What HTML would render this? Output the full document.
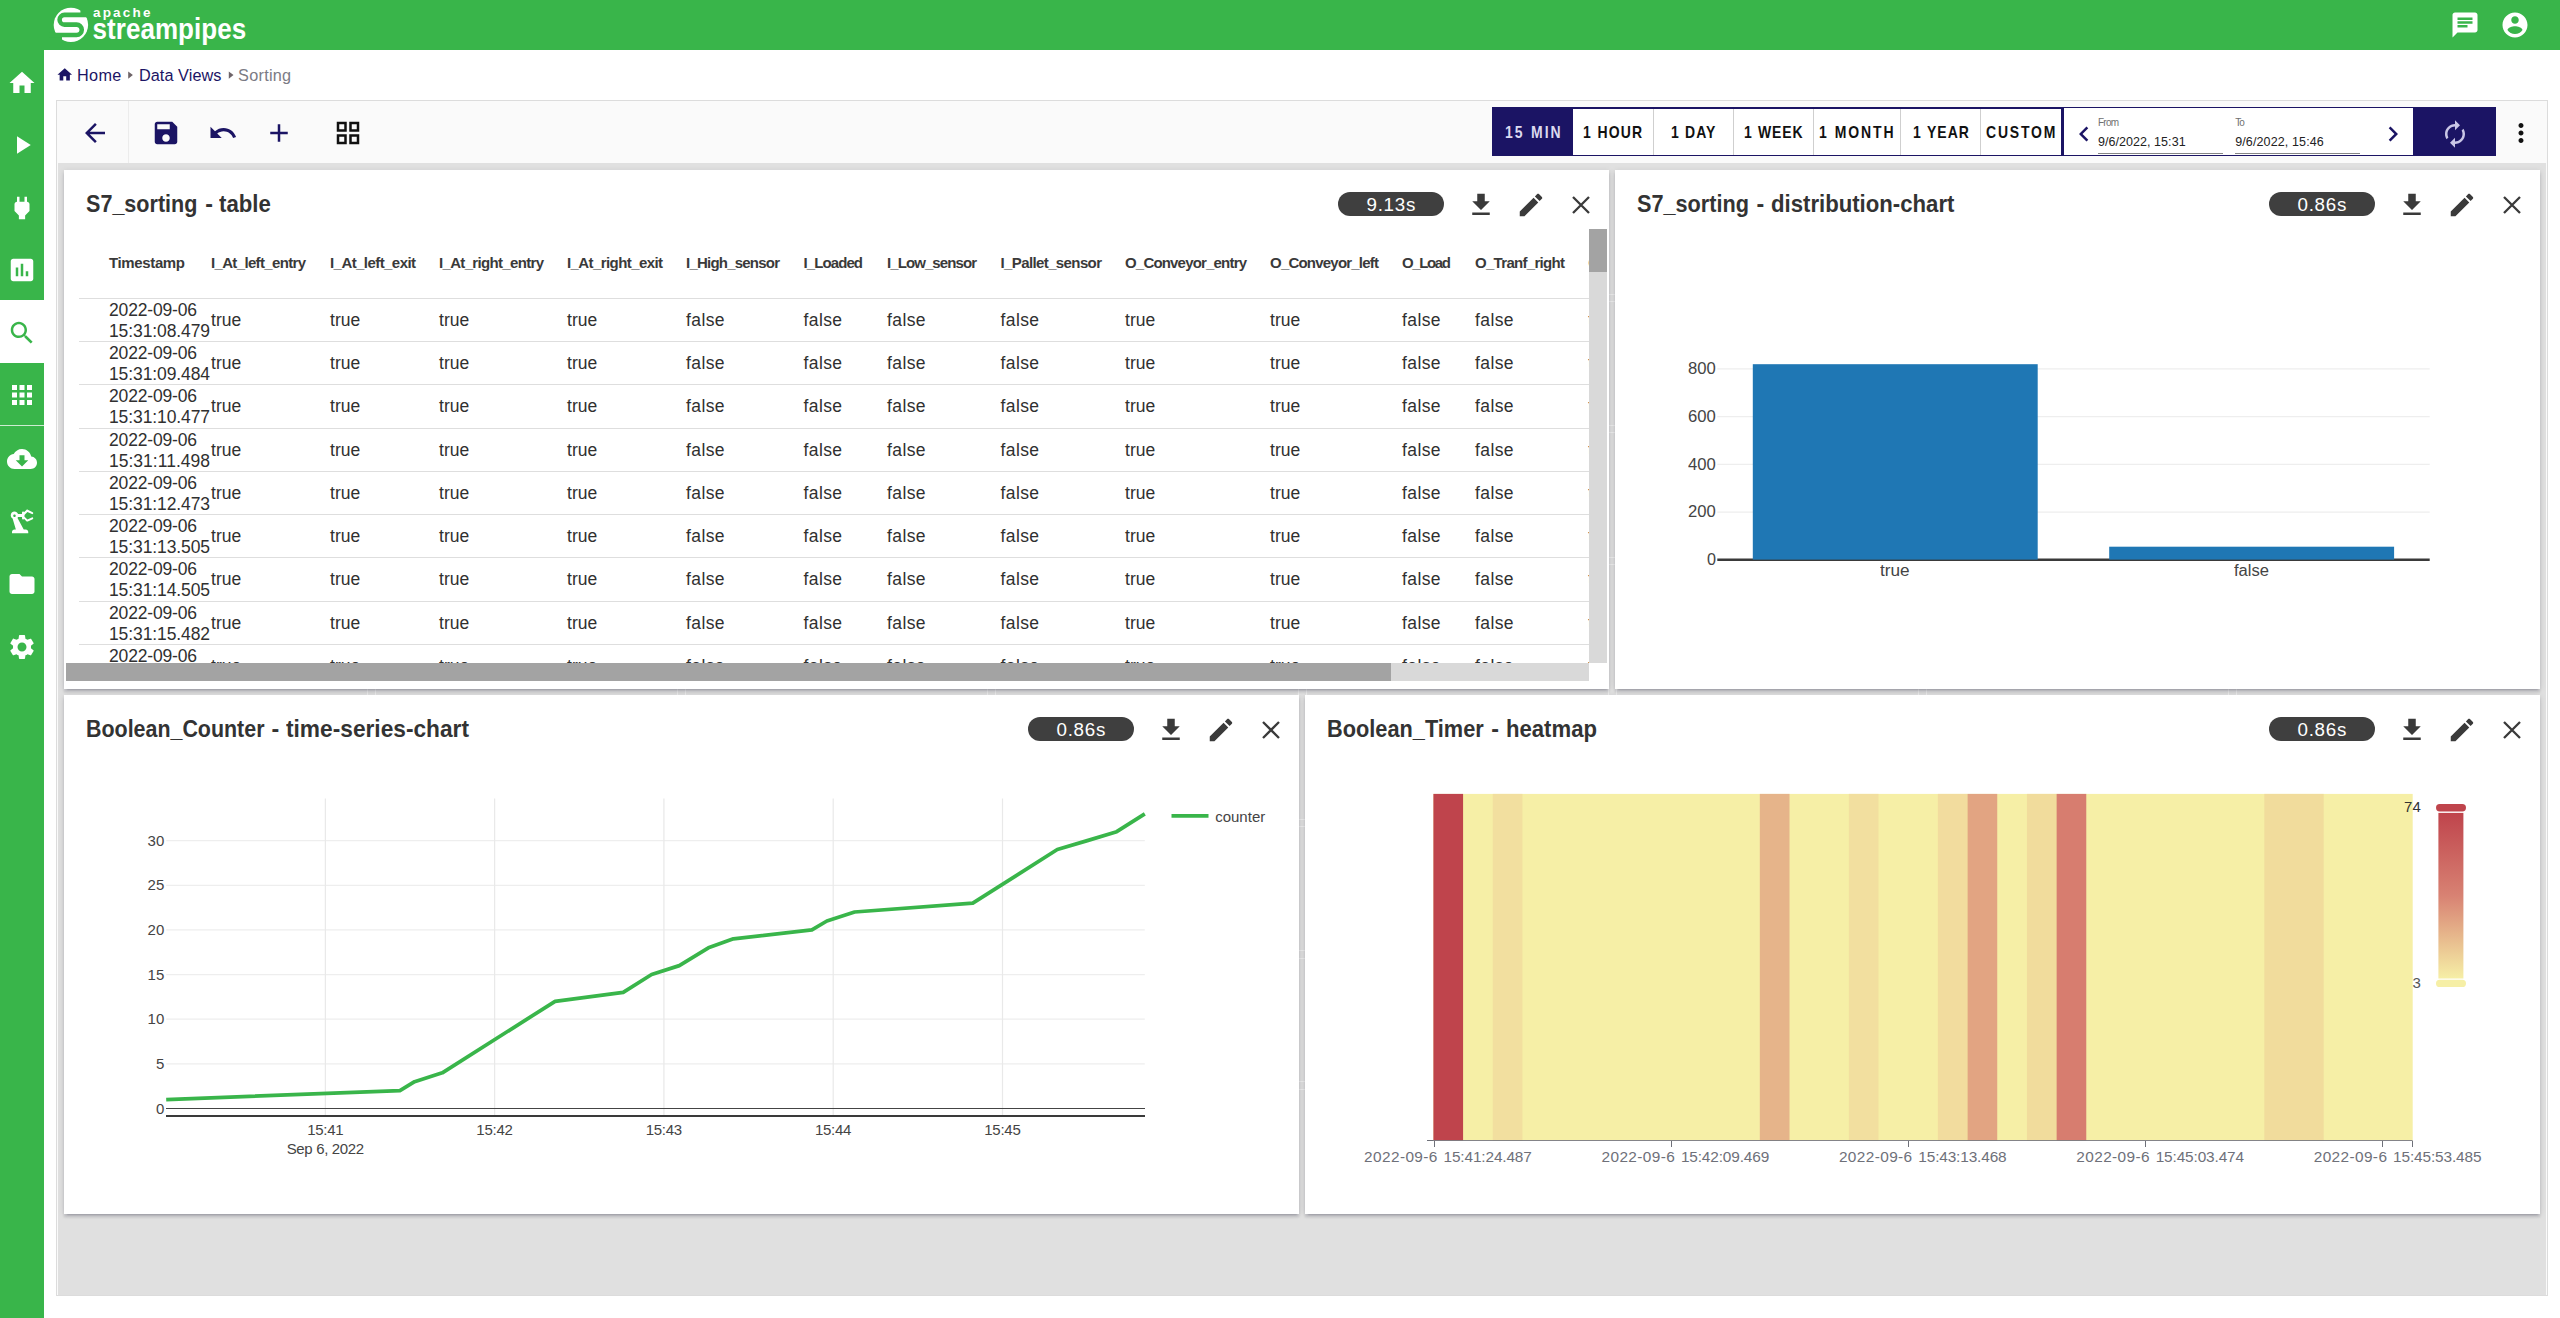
<!DOCTYPE html>
<html><head><meta charset="utf-8"><title>StreamPipes</title>
<style>
html,body{margin:0;padding:0;}
body{width:2560px;height:1318px;position:relative;overflow:hidden;background:#fff;font-family:"Liberation Sans",sans-serif;}
.t{position:absolute;white-space:pre;line-height:1;}
.i{position:absolute;display:block;}
.r{position:absolute;}
svg.c{position:absolute;display:block;overflow:visible;}
.p{position:absolute;background:#fff;box-shadow:0 3.75px 1.25px -2.5px rgba(0,0,30,.12),0 2.5px 2.5px 0 rgba(0,0,30,.13),0 1.25px 6.25px 0 rgba(0,0,30,.12);}
</style></head><body>
<div class="r" style="left:0.00px;top:0.00px;width:2560.00px;height:50.00px;background:#39b54a;"></div>
<div class="r" style="left:0.00px;top:50.00px;width:44.00px;height:1268.00px;background:#39b54a;"></div>
<div class="r" style="left:0.00px;top:300.00px;width:44.00px;height:63.00px;background:#fff;"></div>
<svg class="c" style="left:48px;top:2px;width:48px;height:46px" viewBox="48 2 48 46">
<circle cx="70.9" cy="24.9" r="17.2" fill="#fff"/>
<path d="M80.4 3 H92 V15 H80.4 Z" fill="#39b54a"/>
<path d="M49 35 H62 V47 H49 Z" fill="#39b54a"/>
<path d="M92 14.9 H64.45 A4.85 4.85 0 0 0 64.45 24.6 H76.55 A5.2 5.2 0 0 1 76.55 35 H49" fill="none" stroke="#39b54a" stroke-width="4.6"/>
</svg>
<span class="t" style="left:93.00px;top:6.00px;font-size:13.5px;color:#fff;font-weight:700;letter-spacing:2.176px;">apache</span>
<span class="t" style="left:92.60px;top:17.00px;font-size:26px;color:#fff;font-weight:700;letter-spacing:0.031px;transform:scaleY(1.1);transform-origin:0 84.65%;">streampipes</span>
<svg class="i" style="left:2449.50px;top:9.50px;width:30px;height:30px" viewBox="0 0 24 24"><path fill="#fff" d="M20 2H4c-1.1 0-1.99.9-1.99 2L2 22l4-4h14c1.1 0 2-.9 2-2V4c0-1.1-.9-2-2-2zM6 9h12v2H6V9zm8 5H6v-2h8v2zm4-6H6V6h12v2z"/></svg>
<svg class="i" style="left:2499.60px;top:9.50px;width:30px;height:30px" viewBox="0 0 24 24"><path fill="#fff" d="M12 2C6.48 2 2 6.48 2 12s4.48 10 10 10 10-4.48 10-10S17.52 2 12 2zm0 3c1.66 0 3 1.34 3 3s-1.34 3-3 3-3-1.34-3-3 1.34-3 3-3zm0 14.2c-2.5 0-4.71-1.28-6-3.22.03-1.99 4-3.08 6-3.08 1.99 0 5.97 1.09 6 3.08-1.29 1.94-3.5 3.22-6 3.22z"/></svg>
<svg class="i" style="left:6.60px;top:68.00px;width:30px;height:30px" viewBox="0 0 24 24"><path fill="#fff" d="M10 20v-6h4v6h5v-8h3L12 3 2 12h3v8z"/></svg>
<svg class="i" style="left:6.60px;top:130.00px;width:30px;height:30px" viewBox="0 0 24 24"><path fill="#fff" d="M8 5v14l11-7z"/></svg>
<svg class="i" style="left:6.60px;top:192.60px;width:30px;height:30px" viewBox="0 0 24 24"><path fill="#fff" d="M16.01 7L16 3h-2v4h-4V3H8v4h-.01C7 6.99 6 7.99 6 8.99v5.49L9.5 18v3h5v-3l3.5-3.51v-5.5c0-1-1-2-1.99-1.99z"/></svg>
<svg class="i" style="left:6.60px;top:255.00px;width:30px;height:30px" viewBox="0 0 24 24"><path fill="#fff" d="M19 3H5c-1.1 0-2 .9-2 2v14c0 1.1.9 2 2 2h14c1.1 0 2-.9 2-2V5c0-1.1-.9-2-2-2zM9 17H7v-7h2v7zm4 0h-2V7h2v10zm4 0h-2v-4h2v4z"/></svg>
<svg class="i" style="left:6.60px;top:318.00px;width:30px;height:30px" viewBox="0 0 24 24"><path fill="#39b54a" d="M15.5 14h-.79l-.28-.27C15.41 12.59 16 11.11 16 9.5 16 5.91 13.09 3 9.5 3S3 5.91 3 9.5 5.91 16 9.5 16c1.61 0 3.09-.59 4.23-1.57l.27.28v.79l5 4.99L20.49 19l-4.99-5zm-6 0C7.01 14 5 11.99 5 9.5S7.01 5 9.5 5 14 7.01 14 9.5 11.99 14 9.5 14z"/></svg>
<svg class="i" style="left:6.60px;top:379.50px;width:30px;height:30px" viewBox="0 0 24 24"><path fill="#fff" d="M4 8h4V4H4v4zm6 12h4v-4h-4v4zm-6 0h4v-4H4v4zm0-6h4v-4H4v4zm6 0h4v-4h-4v4zm6-10v4h4V4h-4zm-6 4h4V4h-4v4zm6 6h4v-4h-4v4zm0 6h4v-4h-4v4z"/></svg>
<div class="r" style="left:0.00px;top:425.00px;width:44.00px;height:1.30px;background:rgba(255,255,255,.75);"></div>
<svg class="i" style="left:6.60px;top:444.00px;width:30px;height:30px" viewBox="0 0 24 24"><path fill="#fff" d="M19.35 10.04C18.67 6.59 15.64 4 12 4 9.11 4 6.6 5.64 5.35 8.04 2.34 8.36 0 10.91 0 14c0 3.31 2.69 6 6 6h13c2.76 0 5-2.24 5-5 0-2.64-2.05-4.78-4.65-4.96zM17 13l-5 5-5-5h3V9h4v4h3z"/></svg>
<svg class="i" style="left:6.60px;top:507.00px;width:30px;height:30px" viewBox="0 0 24 24"><path fill="#fff" d="M19.93 8.35l-3.6 1.68L14 7.7V6.3l2.33-2.33 3.6 1.68c.38.18.82.01 1-.36.18-.38.01-.82-.36-1L16.65 2.1c-.38-.18-.83-.1-1.13.2l-1.74 1.74c-.18-.24-.46-.39-.78-.39-.55 0-1 .45-1 1v1H8.82C8.4 4.47 7.3 3.65 6 3.65c-1.66 0-3 1.34-3 3 0 1.1.6 2.05 1.48 2.58L7.08 18H6c-1.1 0-2 .9-2 2v1h13v-1c0-1.1-.9-2-2-2h-1.62L8.41 8.77c.17-.24.31-.49.41-.77H12v1c0 .55.45 1 1 1 .32 0 .6-.16.78-.39l1.74 1.74c.3.3.75.38 1.13.2l3.92-1.83c.38-.18.54-.62.36-1-.18-.38-.62-.54-1-.36zM6 8c-.55 0-1-.45-1-1s.45-1 1-1 1 .45 1 1-.45 1-1 1z"/></svg>
<svg class="i" style="left:6.60px;top:568.50px;width:30px;height:30px" viewBox="0 0 24 24"><path fill="#fff" d="M10 4H4c-1.1 0-1.99.9-1.99 2L2 18c0 1.1.9 2 2 2h16c1.1 0 2-.9 2-2V8c0-1.1-.9-2-2-2h-8l-2-2z"/></svg>
<svg class="i" style="left:6.60px;top:631.70px;width:30px;height:30px" viewBox="0 0 24 24"><path fill="#fff" d="M19.14 12.94c.04-.3.06-.61.06-.94 0-.32-.02-.64-.07-.94l2.03-1.58c.18-.14.23-.41.12-.61l-1.92-3.32c-.12-.22-.37-.29-.59-.22l-2.39.96c-.5-.38-1.03-.7-1.62-.94l-.36-2.54c-.04-.24-.24-.41-.48-.41h-3.84c-.24 0-.43.17-.47.41l-.36 2.54c-.59.24-1.13.57-1.62.94l-2.39-.96c-.22-.08-.47 0-.59.22L2.74 8.87c-.12.21-.08.47.12.61l2.03 1.58c-.05.3-.09.63-.09.94s.02.64.07.94l-2.03 1.58c-.18.14-.23.41-.12.61l1.92 3.32c.12.22.37.29.59.22l2.39-.96c.5.38 1.03.7 1.62.94l.36 2.54c.05.24.24.41.48.41h3.84c.24 0 .44-.17.47-.41l.36-2.54c.59-.24 1.13-.56 1.62-.94l2.39.96c.22.08.47 0 .59-.22l1.92-3.32c.12-.22.07-.47-.12-.61l-2.01-1.58zM12 15.6c-1.98 0-3.6-1.62-3.6-3.6s1.62-3.6 3.6-3.6 3.6 1.62 3.6 3.6-1.62 3.6-3.6 3.6z"/></svg>
<svg class="i" style="left:55.90px;top:65.70px;width:17.5px;height:17.5px" viewBox="0 0 24 24"><path fill="#1b1464" d="M10 20v-6h4v6h5v-8h3L12 3 2 12h3v8z"/></svg>
<span class="t" style="left:77.10px;top:67.00px;font-size:16.25px;color:#1b1464;letter-spacing:0.282px;">Home</span>
<svg class="c" style="left:0;top:0;width:400px;height:100px" viewBox="0 0 400 100"><path d="M128.2 71.4 L132.9 75.1 L128.2 78.8 Z M228.8 71.4 L233.5 75.1 L228.8 78.8 Z" fill="#6e6468"/></svg>
<span class="t" style="left:138.90px;top:67.00px;font-size:16.25px;color:#1b1464;letter-spacing:0.078px;">Data Views</span>
<span class="t" style="left:238.10px;top:67.00px;font-size:16.25px;color:#7b7b85;letter-spacing:0.253px;">Sorting</span>
<div class="r" style="left:56.00px;top:100.00px;width:2492.00px;height:1196.00px;background:#fafafa;box-sizing:border-box;border:1px solid #dcdcdc;"></div>
<div class="r" style="left:58.00px;top:163.00px;width:2488.00px;height:1132.00px;background:#e0e0e0;"></div>
<div class="r" style="left:127.60px;top:101.00px;width:1.00px;height:62.00px;background:#ececec;"></div>
<svg class="i" style="left:80.10px;top:118.30px;width:30px;height:30px" viewBox="0 0 24 24"><path fill="#1b1464" d="M20 11H7.83l5.59-5.59L12 4l-8 8 8 8 1.41-1.41L7.83 13H20v-2z"/></svg>
<svg class="i" style="left:150.90px;top:118.30px;width:30px;height:30px" viewBox="0 0 24 24"><path fill="#1b1464" d="M17 3H5c-1.11 0-2 .9-2 2v14c0 1.1.89 2 2 2h14c1.1 0 2-.9 2-2V7l-4-4zm-5 16c-1.66 0-3-1.34-3-3s1.34-3 3-3 3 1.34 3 3-1.34 3-3 3zm3-10H5V5h10v4z"/></svg>
<svg class="i" style="left:208.00px;top:118.30px;width:30px;height:30px" viewBox="0 0 24 24"><path fill="#1b1464" d="M12.5 8c-2.65 0-5.05.99-6.9 2.6L2 7v9h9l-3.62-3.62c1.39-1.16 3.16-1.88 5.12-1.88 3.54 0 6.55 2.31 7.6 5.5l2.37-.78C21.08 11.03 17.15 8 12.5 8z"/></svg>
<svg class="i" style="left:263.80px;top:118.30px;width:30px;height:30px" viewBox="0 0 24 24"><path fill="#1b1464" d="M19 13h-6v6h-2v-6H5v-2h6V5h2v6h6v2z"/></svg>
<svg class="i" style="left:332.90px;top:118.30px;width:30px;height:30px" viewBox="0 0 24 24"><path fill="#111" d="M3 3v8h8V3H3zm6 6H5V5h4v4zm-6 4v8h8v-8H3zm6 6H5v-4h4v4zm4-16v8h8V3h-8zm6 6h-4V5h4v4zm-6 4v8h8v-8h-8zm6 6h-4v-4h4v4z"/></svg>
<div class="r" style="left:1492.00px;top:107.00px;width:570.00px;height:49.00px;background:#fff;box-sizing:border-box;border:solid #1b1464;border-width:2px 0 1px 2px;"></div>
<div class="r" style="left:1492.00px;top:107.00px;width:81.00px;height:49.00px;background:#1b1464;"></div>
<div class="r" style="left:1653.00px;top:109.00px;width:1.00px;height:46.00px;background:#cfcfcf;"></div>
<div class="r" style="left:1733.00px;top:109.00px;width:1.00px;height:46.00px;background:#cfcfcf;"></div>
<div class="r" style="left:1813.00px;top:109.00px;width:1.00px;height:46.00px;background:#cfcfcf;"></div>
<div class="r" style="left:1900.00px;top:109.00px;width:1.00px;height:46.00px;background:#cfcfcf;"></div>
<div class="r" style="left:1980.00px;top:109.00px;width:1.00px;height:46.00px;background:#cfcfcf;"></div>
<div class="r" style="left:2061.00px;top:107.00px;width:354.00px;height:49.00px;background:#fff;box-sizing:border-box;border:solid #1b1464;border-width:1px 0 1px 3px;"></div>
<div class="r" style="left:2413.00px;top:107.00px;width:83.00px;height:49.00px;background:#1b1464;"></div>
<span class="t" style="left:1504.90px;top:124.00px;font-size:16.25px;color:#dcdaf0;font-weight:700;letter-spacing:2.359px;word-spacing:0.6px;transform:scaleX(0.8600);transform-origin:0 0;">15 MIN</span>
<span class="t" style="left:1583.40px;top:124.00px;font-size:16.25px;color:#111;font-weight:700;letter-spacing:1.322px;word-spacing:0.6px;transform:scaleX(0.8600);transform-origin:0 0;">1 HOUR</span>
<span class="t" style="left:1670.50px;top:124.00px;font-size:16.25px;color:#111;font-weight:700;letter-spacing:1.134px;word-spacing:0.6px;transform:scaleX(0.8600);transform-origin:0 0;">1 DAY</span>
<span class="t" style="left:1743.70px;top:124.00px;font-size:16.25px;color:#111;font-weight:700;letter-spacing:1.024px;word-spacing:0.6px;transform:scaleX(0.8600);transform-origin:0 0;">1 WEEK</span>
<span class="t" style="left:1819.00px;top:124.00px;font-size:16.25px;color:#111;font-weight:700;letter-spacing:2.150px;word-spacing:0.6px;transform:scaleX(0.8600);transform-origin:0 0;">1 MONTH</span>
<span class="t" style="left:1912.50px;top:124.00px;font-size:16.25px;color:#111;font-weight:700;letter-spacing:1.200px;word-spacing:0.6px;transform:scaleX(0.8600);transform-origin:0 0;">1 YEAR</span>
<span class="t" style="left:1986.30px;top:124.00px;font-size:16.25px;color:#111;font-weight:700;letter-spacing:2.093px;word-spacing:0.6px;transform:scaleX(0.8600);transform-origin:0 0;">CUSTOM</span>
<svg class="i" style="left:2068.80px;top:119.00px;width:30px;height:30px" viewBox="0 0 24 24"><path fill="#1b1464" d="M15.41 7.41L14 6l-6 6 6 6 1.41-1.41L10.83 12z"/></svg>
<svg class="i" style="left:2377.80px;top:119.00px;width:30px;height:30px" viewBox="0 0 24 24"><path fill="#1b1464" d="M10 6L8.59 7.41 13.17 12l-4.58 4.59L10 18l6-6z"/></svg>
<span class="t" style="left:2098.00px;top:118.00px;font-size:10px;color:#707070;letter-spacing:-0.777px;">From</span>
<span class="t" style="left:2235.20px;top:118.00px;font-size:10px;color:#707070;letter-spacing:-1.060px;">To</span>
<span class="t" style="left:2098.00px;top:136.00px;font-size:12.5px;color:#222;letter-spacing:0.051px;">9/6/2022, 15:31</span>
<span class="t" style="left:2235.20px;top:136.00px;font-size:12.5px;color:#222;letter-spacing:0.122px;">9/6/2022, 15:46</span>
<div class="r" style="left:2098.00px;top:153.00px;width:125.00px;height:1.00px;background:#858585;"></div>
<div class="r" style="left:2235.00px;top:153.00px;width:125.00px;height:1.00px;background:#858585;"></div>
<svg class="i" style="left:2439.50px;top:119.25px;width:30px;height:30px" viewBox="0 0 24 24"><path fill="#c9c6e6" d="M12 6v3l4-4-4-4v3c-4.42 0-8 3.58-8 8 0 1.57.46 3.03 1.24 4.26L6.7 14.8c-.45-.83-.7-1.79-.7-2.8 0-3.31 2.69-6 6-6zm6.76 1.74L17.3 9.2c.44.84.7 1.79.7 2.8 0 3.31-2.69 6-6 6v-3l-4 4 4 4v-3c4.42 0 8-3.58 8-8 0-1.57-.46-3.03-1.24-4.26z"/></svg>
<svg class="i" style="left:2506.30px;top:118.00px;width:30px;height:30px" viewBox="0 0 24 24"><path fill="#111" d="M12 8c1.1 0 2-.9 2-2s-.9-2-2-2-2 .9-2 2 .9 2 2 2zm0 2c-1.1 0-2 .9-2 2s.9 2 2 2 2-.9 2-2-.9-2-2-2zm0 6c-1.1 0-2 .9-2 2s.9 2 2 2 2-.9 2-2-.9-2-2-2z"/></svg>
<div class="r" style="left:367.00px;top:689.00px;width:1.00px;height:6.00px;background:rgba(255,255,255,.45);"></div>
<div class="r" style="left:375.00px;top:689.00px;width:1.00px;height:6.00px;background:rgba(255,255,255,.45);"></div>
<div class="r" style="left:677.00px;top:689.00px;width:1.00px;height:6.00px;background:rgba(255,255,255,.45);"></div>
<div class="r" style="left:685.00px;top:689.00px;width:1.00px;height:6.00px;background:rgba(255,255,255,.45);"></div>
<div class="r" style="left:987.00px;top:689.00px;width:1.00px;height:6.00px;background:rgba(255,255,255,.45);"></div>
<div class="r" style="left:995.00px;top:689.00px;width:1.00px;height:6.00px;background:rgba(255,255,255,.45);"></div>
<div class="r" style="left:1298.00px;top:689.00px;width:1.00px;height:6.00px;background:rgba(255,255,255,.45);"></div>
<div class="r" style="left:1306.00px;top:689.00px;width:1.00px;height:6.00px;background:rgba(255,255,255,.45);"></div>
<div class="r" style="left:1608.00px;top:689.00px;width:1.00px;height:6.00px;background:rgba(255,255,255,.45);"></div>
<div class="r" style="left:1616.00px;top:689.00px;width:1.00px;height:6.00px;background:rgba(255,255,255,.45);"></div>
<div class="r" style="left:1918.00px;top:689.00px;width:1.00px;height:6.00px;background:rgba(255,255,255,.45);"></div>
<div class="r" style="left:1926.00px;top:689.00px;width:1.00px;height:6.00px;background:rgba(255,255,255,.45);"></div>
<div class="r" style="left:2228.00px;top:689.00px;width:1.00px;height:6.00px;background:rgba(255,255,255,.45);"></div>
<div class="r" style="left:2236.00px;top:689.00px;width:1.00px;height:6.00px;background:rgba(255,255,255,.45);"></div>
<div class="r" style="left:1609.00px;top:294.00px;width:6.00px;height:1.00px;background:rgba(255,255,255,.45);"></div>
<div class="r" style="left:1609.00px;top:301.00px;width:6.00px;height:1.00px;background:rgba(255,255,255,.45);"></div>
<div class="r" style="left:1299.00px;top:819.00px;width:6.00px;height:1.00px;background:rgba(255,255,255,.45);"></div>
<div class="r" style="left:1299.00px;top:826.00px;width:6.00px;height:1.00px;background:rgba(255,255,255,.45);"></div>
<div class="r" style="left:1609.00px;top:425.00px;width:6.00px;height:1.00px;background:rgba(255,255,255,.45);"></div>
<div class="r" style="left:1609.00px;top:432.00px;width:6.00px;height:1.00px;background:rgba(255,255,255,.45);"></div>
<div class="r" style="left:1299.00px;top:950.00px;width:6.00px;height:1.00px;background:rgba(255,255,255,.45);"></div>
<div class="r" style="left:1299.00px;top:958.00px;width:6.00px;height:1.00px;background:rgba(255,255,255,.45);"></div>
<div class="r" style="left:1609.00px;top:557.00px;width:6.00px;height:1.00px;background:rgba(255,255,255,.45);"></div>
<div class="r" style="left:1609.00px;top:564.00px;width:6.00px;height:1.00px;background:rgba(255,255,255,.45);"></div>
<div class="r" style="left:1299.00px;top:1081.00px;width:6.00px;height:1.00px;background:rgba(255,255,255,.45);"></div>
<div class="r" style="left:1299.00px;top:1089.00px;width:6.00px;height:1.00px;background:rgba(255,255,255,.45);"></div>
<div class="p" style="left:64px;top:170px;width:1545px;height:519px"></div>
<div class="p" style="left:1615px;top:170px;width:925px;height:519px"></div>
<div class="p" style="left:64px;top:695px;width:1235px;height:519px"></div>
<div class="p" style="left:1305px;top:695px;width:1235px;height:519px"></div>
<span class="t" style="left:85.50px;top:193.00px;font-size:23.2px;color:#333;font-weight:700;transform:scaleX(0.9300);transform-origin:0 0;">S7_sorting</span>
<span class="t" style="left:205.30px;top:193.00px;font-size:23.2px;color:#333;font-weight:700;">-</span>
<span class="t" style="left:219.00px;top:193.00px;font-size:23.2px;color:#333;font-weight:700;transform:scaleX(0.9566);transform-origin:0 0;">table</span>
<div class="r" style="left:1338.00px;top:192.00px;width:106.00px;height:24.00px;background:#3f3f3f;border-radius:12px;"></div>
<span class="t" style="left:1366.55px;top:196.00px;font-size:18.75px;color:#fff;letter-spacing:0.709px;">9.13s</span>
<svg class="i" style="left:1466.25px;top:190.10px;width:30px;height:30px" viewBox="0 0 24 24"><path fill="#3a3a3a" d="M19 9h-4V3H9v6H5l7 7 7-7zM5 18v2h14v-2H5z"/></svg>
<svg class="i" style="left:1516.10px;top:189.70px;width:30px;height:30px" viewBox="0 0 24 24"><path fill="#3a3a3a" d="M3 17.25V21h3.75L17.81 9.94l-3.75-3.75L3 17.25zM20.71 7.04c.39-.39.39-1.02 0-1.41l-2.34-2.34c-.39-.39-1.02-.39-1.41 0l-1.83 1.83 3.75 3.75 1.83-1.83z"/></svg>
<svg class="i" style="left:1566.25px;top:189.80px;width:30px;height:30px" viewBox="0 0 24 24"><path fill="none" stroke="#3a3a3a" stroke-width="1.85" d="M5.6 5.6L18.4 18.4M18.4 5.6L5.6 18.4"/></svg>
<span class="t" style="left:1636.50px;top:193.00px;font-size:23.2px;color:#333;font-weight:700;transform:scaleX(0.9341);transform-origin:0 0;">S7_sorting</span>
<span class="t" style="left:1756.40px;top:193.00px;font-size:23.2px;color:#333;font-weight:700;">-</span>
<span class="t" style="left:1770.70px;top:193.00px;font-size:23.2px;color:#333;font-weight:700;transform:scaleX(0.9556);transform-origin:0 0;">distribution-chart</span>
<div class="r" style="left:2269.00px;top:192.00px;width:106.00px;height:24.00px;background:#3f3f3f;border-radius:12px;"></div>
<span class="t" style="left:2297.55px;top:196.00px;font-size:18.75px;color:#fff;letter-spacing:0.709px;">0.86s</span>
<svg class="i" style="left:2397.25px;top:190.10px;width:30px;height:30px" viewBox="0 0 24 24"><path fill="#3a3a3a" d="M19 9h-4V3H9v6H5l7 7 7-7zM5 18v2h14v-2H5z"/></svg>
<svg class="i" style="left:2447.10px;top:189.70px;width:30px;height:30px" viewBox="0 0 24 24"><path fill="#3a3a3a" d="M3 17.25V21h3.75L17.81 9.94l-3.75-3.75L3 17.25zM20.71 7.04c.39-.39.39-1.02 0-1.41l-2.34-2.34c-.39-.39-1.02-.39-1.41 0l-1.83 1.83 3.75 3.75 1.83-1.83z"/></svg>
<svg class="i" style="left:2497.25px;top:189.80px;width:30px;height:30px" viewBox="0 0 24 24"><path fill="none" stroke="#3a3a3a" stroke-width="1.85" d="M5.6 5.6L18.4 18.4M18.4 5.6L5.6 18.4"/></svg>
<span class="t" style="left:85.75px;top:718.00px;font-size:23.2px;color:#333;font-weight:700;transform:scaleX(0.9237);transform-origin:0 0;">Boolean_Counter</span>
<span class="t" style="left:271.50px;top:718.00px;font-size:23.2px;color:#333;font-weight:700;">-</span>
<span class="t" style="left:286.25px;top:718.00px;font-size:23.2px;color:#333;font-weight:700;transform:scaleX(0.9793);transform-origin:0 0;">time-series-chart</span>
<div class="r" style="left:1028.00px;top:717.00px;width:106.00px;height:24.00px;background:#3f3f3f;border-radius:12px;"></div>
<span class="t" style="left:1056.55px;top:721.00px;font-size:18.75px;color:#fff;letter-spacing:0.709px;">0.86s</span>
<svg class="i" style="left:1156.25px;top:715.10px;width:30px;height:30px" viewBox="0 0 24 24"><path fill="#3a3a3a" d="M19 9h-4V3H9v6H5l7 7 7-7zM5 18v2h14v-2H5z"/></svg>
<svg class="i" style="left:1206.10px;top:714.70px;width:30px;height:30px" viewBox="0 0 24 24"><path fill="#3a3a3a" d="M3 17.25V21h3.75L17.81 9.94l-3.75-3.75L3 17.25zM20.71 7.04c.39-.39.39-1.02 0-1.41l-2.34-2.34c-.39-.39-1.02-.39-1.41 0l-1.83 1.83 3.75 3.75 1.83-1.83z"/></svg>
<svg class="i" style="left:1256.25px;top:714.80px;width:30px;height:30px" viewBox="0 0 24 24"><path fill="none" stroke="#3a3a3a" stroke-width="1.85" d="M5.6 5.6L18.4 18.4M18.4 5.6L5.6 18.4"/></svg>
<span class="t" style="left:1327.00px;top:718.00px;font-size:23.2px;color:#333;font-weight:700;transform:scaleX(0.9379);transform-origin:0 0;">Boolean_Timer</span>
<span class="t" style="left:1491.20px;top:718.00px;font-size:23.2px;color:#333;font-weight:700;">-</span>
<span class="t" style="left:1505.70px;top:718.00px;font-size:23.2px;color:#333;font-weight:700;transform:scaleX(0.9539);transform-origin:0 0;">heatmap</span>
<div class="r" style="left:2269.00px;top:717.00px;width:106.00px;height:24.00px;background:#3f3f3f;border-radius:12px;"></div>
<span class="t" style="left:2297.55px;top:721.00px;font-size:18.75px;color:#fff;letter-spacing:0.709px;">0.86s</span>
<svg class="i" style="left:2397.25px;top:715.10px;width:30px;height:30px" viewBox="0 0 24 24"><path fill="#3a3a3a" d="M19 9h-4V3H9v6H5l7 7 7-7zM5 18v2h14v-2H5z"/></svg>
<svg class="i" style="left:2447.10px;top:714.70px;width:30px;height:30px" viewBox="0 0 24 24"><path fill="#3a3a3a" d="M3 17.25V21h3.75L17.81 9.94l-3.75-3.75L3 17.25zM20.71 7.04c.39-.39.39-1.02 0-1.41l-2.34-2.34c-.39-.39-1.02-.39-1.41 0l-1.83 1.83 3.75 3.75 1.83-1.83z"/></svg>
<svg class="i" style="left:2497.25px;top:714.80px;width:30px;height:30px" viewBox="0 0 24 24"><path fill="none" stroke="#3a3a3a" stroke-width="1.85" d="M5.6 5.6L18.4 18.4M18.4 5.6L5.6 18.4"/></svg>
<div class="r" style="left:1589.00px;top:229.00px;width:18.00px;height:434.00px;background:#d9d9d9;"></div>
<div class="r" style="left:1589.00px;top:229.00px;width:18.00px;height:43.00px;background:#a3a3a3;"></div>
<div class="r" style="left:66.00px;top:663.00px;width:1523.00px;height:18.00px;background:#d9d9d9;"></div>
<div class="r" style="left:66.00px;top:663.00px;width:1325.00px;height:18.00px;background:#a3a3a3;"></div>
<div class="r" style="left:66px;top:229px;width:1523px;height:434px;overflow:hidden">
<span class="t" style="left:43.00px;top:26.00px;font-size:15px;color:#3a3a3a;font-weight:700;letter-spacing:-0.364px;">Timestamp</span>
<span class="t" style="left:145.00px;top:26.00px;font-size:15px;color:#3a3a3a;font-weight:700;letter-spacing:-0.657px;">I_At_left_entry</span>
<span class="t" style="left:264.00px;top:26.00px;font-size:15px;color:#3a3a3a;font-weight:700;letter-spacing:-0.567px;">I_At_left_exit</span>
<span class="t" style="left:373.00px;top:26.00px;font-size:15px;color:#3a3a3a;font-weight:700;letter-spacing:-0.669px;">I_At_right_entry</span>
<span class="t" style="left:501.00px;top:26.00px;font-size:15px;color:#3a3a3a;font-weight:700;letter-spacing:-0.585px;">I_At_right_exit</span>
<span class="t" style="left:620.00px;top:26.00px;font-size:15px;color:#3a3a3a;font-weight:700;letter-spacing:-0.780px;">I_High_sensor</span>
<span class="t" style="left:737.50px;top:26.00px;font-size:15px;color:#3a3a3a;font-weight:700;letter-spacing:-0.907px;">I_Loaded</span>
<span class="t" style="left:821.00px;top:26.00px;font-size:15px;color:#3a3a3a;font-weight:700;letter-spacing:-0.912px;">I_Low_sensor</span>
<span class="t" style="left:934.50px;top:26.00px;font-size:15px;color:#3a3a3a;font-weight:700;letter-spacing:-0.611px;">I_Pallet_sensor</span>
<span class="t" style="left:1059.00px;top:26.00px;font-size:15px;color:#3a3a3a;font-weight:700;letter-spacing:-0.815px;">O_Conveyor_entry</span>
<span class="t" style="left:1204.00px;top:26.00px;font-size:15px;color:#3a3a3a;font-weight:700;letter-spacing:-0.788px;">O_Conveyor_left</span>
<span class="t" style="left:1336.00px;top:26.00px;font-size:15px;color:#3a3a3a;font-weight:700;letter-spacing:-1.369px;">O_Load</span>
<span class="t" style="left:1409.00px;top:26.00px;font-size:15px;color:#3a3a3a;font-weight:700;letter-spacing:-0.696px;">O_Tranf_right</span>
<span class="t" style="left:1522.20px;top:26.00px;font-size:15px;color:#3a3a3a;font-weight:700;">O_Tranf_left</span>
<div class="r" style="left:13.00px;top:69.00px;width:1510.00px;height:1.00px;background:#dedede;"></div>
<div class="r" style="left:13.00px;top:112.00px;width:1510.00px;height:1.00px;background:#dedede;"></div>
<div class="r" style="left:13.00px;top:155.00px;width:1510.00px;height:1.00px;background:#dedede;"></div>
<div class="r" style="left:13.00px;top:199.00px;width:1510.00px;height:1.00px;background:#dedede;"></div>
<div class="r" style="left:13.00px;top:242.00px;width:1510.00px;height:1.00px;background:#dedede;"></div>
<div class="r" style="left:13.00px;top:285.00px;width:1510.00px;height:1.00px;background:#dedede;"></div>
<div class="r" style="left:13.00px;top:328.00px;width:1510.00px;height:1.00px;background:#dedede;"></div>
<div class="r" style="left:13.00px;top:372.00px;width:1510.00px;height:1.00px;background:#dedede;"></div>
<div class="r" style="left:13.00px;top:415.00px;width:1510.00px;height:1.00px;background:#dedede;"></div>
<div class="r" style="left:13.00px;top:458.00px;width:1510.00px;height:1.00px;background:#dedede;"></div>
<span class="t" style="left:43.00px;top:73.00px;font-size:17.5px;color:#303030;letter-spacing:-0.168px;">2022-09-06</span>
<span class="t" style="left:43.00px;top:94.00px;font-size:17.5px;color:#303030;letter-spacing:-0.108px;">15:31:08.479</span>
<span class="t" style="left:145.00px;top:83.00px;font-size:17.5px;color:#303030;letter-spacing:0.049px;">true</span>
<span class="t" style="left:264.00px;top:83.00px;font-size:17.5px;color:#303030;letter-spacing:0.049px;">true</span>
<span class="t" style="left:373.00px;top:83.00px;font-size:17.5px;color:#303030;letter-spacing:0.049px;">true</span>
<span class="t" style="left:501.00px;top:83.00px;font-size:17.5px;color:#303030;letter-spacing:0.049px;">true</span>
<span class="t" style="left:620.00px;top:83.00px;font-size:17.5px;color:#303030;letter-spacing:0.410px;">false</span>
<span class="t" style="left:737.50px;top:83.00px;font-size:17.5px;color:#303030;letter-spacing:0.410px;">false</span>
<span class="t" style="left:821.00px;top:83.00px;font-size:17.5px;color:#303030;letter-spacing:0.410px;">false</span>
<span class="t" style="left:934.50px;top:83.00px;font-size:17.5px;color:#303030;letter-spacing:0.410px;">false</span>
<span class="t" style="left:1059.00px;top:83.00px;font-size:17.5px;color:#303030;letter-spacing:0.049px;">true</span>
<span class="t" style="left:1204.00px;top:83.00px;font-size:17.5px;color:#303030;letter-spacing:0.049px;">true</span>
<span class="t" style="left:1336.00px;top:83.00px;font-size:17.5px;color:#303030;letter-spacing:0.410px;">false</span>
<span class="t" style="left:1409.00px;top:83.00px;font-size:17.5px;color:#303030;letter-spacing:0.410px;">false</span>
<span class="t" style="left:1522.20px;top:83.00px;font-size:17.5px;color:#303030;">true</span>
<span class="t" style="left:43.00px;top:116.00px;font-size:17.5px;color:#303030;letter-spacing:-0.168px;">2022-09-06</span>
<span class="t" style="left:43.00px;top:137.00px;font-size:17.5px;color:#303030;letter-spacing:-0.108px;">15:31:09.484</span>
<span class="t" style="left:145.00px;top:126.00px;font-size:17.5px;color:#303030;letter-spacing:0.049px;">true</span>
<span class="t" style="left:264.00px;top:126.00px;font-size:17.5px;color:#303030;letter-spacing:0.049px;">true</span>
<span class="t" style="left:373.00px;top:126.00px;font-size:17.5px;color:#303030;letter-spacing:0.049px;">true</span>
<span class="t" style="left:501.00px;top:126.00px;font-size:17.5px;color:#303030;letter-spacing:0.049px;">true</span>
<span class="t" style="left:620.00px;top:126.00px;font-size:17.5px;color:#303030;letter-spacing:0.410px;">false</span>
<span class="t" style="left:737.50px;top:126.00px;font-size:17.5px;color:#303030;letter-spacing:0.410px;">false</span>
<span class="t" style="left:821.00px;top:126.00px;font-size:17.5px;color:#303030;letter-spacing:0.410px;">false</span>
<span class="t" style="left:934.50px;top:126.00px;font-size:17.5px;color:#303030;letter-spacing:0.410px;">false</span>
<span class="t" style="left:1059.00px;top:126.00px;font-size:17.5px;color:#303030;letter-spacing:0.049px;">true</span>
<span class="t" style="left:1204.00px;top:126.00px;font-size:17.5px;color:#303030;letter-spacing:0.049px;">true</span>
<span class="t" style="left:1336.00px;top:126.00px;font-size:17.5px;color:#303030;letter-spacing:0.410px;">false</span>
<span class="t" style="left:1409.00px;top:126.00px;font-size:17.5px;color:#303030;letter-spacing:0.410px;">false</span>
<span class="t" style="left:1522.20px;top:126.00px;font-size:17.5px;color:#303030;">true</span>
<span class="t" style="left:43.00px;top:159.00px;font-size:17.5px;color:#303030;letter-spacing:-0.168px;">2022-09-06</span>
<span class="t" style="left:43.00px;top:180.00px;font-size:17.5px;color:#303030;letter-spacing:-0.108px;">15:31:10.477</span>
<span class="t" style="left:145.00px;top:169.00px;font-size:17.5px;color:#303030;letter-spacing:0.049px;">true</span>
<span class="t" style="left:264.00px;top:169.00px;font-size:17.5px;color:#303030;letter-spacing:0.049px;">true</span>
<span class="t" style="left:373.00px;top:169.00px;font-size:17.5px;color:#303030;letter-spacing:0.049px;">true</span>
<span class="t" style="left:501.00px;top:169.00px;font-size:17.5px;color:#303030;letter-spacing:0.049px;">true</span>
<span class="t" style="left:620.00px;top:169.00px;font-size:17.5px;color:#303030;letter-spacing:0.410px;">false</span>
<span class="t" style="left:737.50px;top:169.00px;font-size:17.5px;color:#303030;letter-spacing:0.410px;">false</span>
<span class="t" style="left:821.00px;top:169.00px;font-size:17.5px;color:#303030;letter-spacing:0.410px;">false</span>
<span class="t" style="left:934.50px;top:169.00px;font-size:17.5px;color:#303030;letter-spacing:0.410px;">false</span>
<span class="t" style="left:1059.00px;top:169.00px;font-size:17.5px;color:#303030;letter-spacing:0.049px;">true</span>
<span class="t" style="left:1204.00px;top:169.00px;font-size:17.5px;color:#303030;letter-spacing:0.049px;">true</span>
<span class="t" style="left:1336.00px;top:169.00px;font-size:17.5px;color:#303030;letter-spacing:0.410px;">false</span>
<span class="t" style="left:1409.00px;top:169.00px;font-size:17.5px;color:#303030;letter-spacing:0.410px;">false</span>
<span class="t" style="left:1522.20px;top:169.00px;font-size:17.5px;color:#303030;">true</span>
<span class="t" style="left:43.00px;top:203.00px;font-size:17.5px;color:#303030;letter-spacing:-0.168px;">2022-09-06</span>
<span class="t" style="left:43.00px;top:224.00px;font-size:17.5px;color:#303030;letter-spacing:0.010px;">15:31:11.498</span>
<span class="t" style="left:145.00px;top:213.00px;font-size:17.5px;color:#303030;letter-spacing:0.049px;">true</span>
<span class="t" style="left:264.00px;top:213.00px;font-size:17.5px;color:#303030;letter-spacing:0.049px;">true</span>
<span class="t" style="left:373.00px;top:213.00px;font-size:17.5px;color:#303030;letter-spacing:0.049px;">true</span>
<span class="t" style="left:501.00px;top:213.00px;font-size:17.5px;color:#303030;letter-spacing:0.049px;">true</span>
<span class="t" style="left:620.00px;top:213.00px;font-size:17.5px;color:#303030;letter-spacing:0.410px;">false</span>
<span class="t" style="left:737.50px;top:213.00px;font-size:17.5px;color:#303030;letter-spacing:0.410px;">false</span>
<span class="t" style="left:821.00px;top:213.00px;font-size:17.5px;color:#303030;letter-spacing:0.410px;">false</span>
<span class="t" style="left:934.50px;top:213.00px;font-size:17.5px;color:#303030;letter-spacing:0.410px;">false</span>
<span class="t" style="left:1059.00px;top:213.00px;font-size:17.5px;color:#303030;letter-spacing:0.049px;">true</span>
<span class="t" style="left:1204.00px;top:213.00px;font-size:17.5px;color:#303030;letter-spacing:0.049px;">true</span>
<span class="t" style="left:1336.00px;top:213.00px;font-size:17.5px;color:#303030;letter-spacing:0.410px;">false</span>
<span class="t" style="left:1409.00px;top:213.00px;font-size:17.5px;color:#303030;letter-spacing:0.410px;">false</span>
<span class="t" style="left:1522.20px;top:213.00px;font-size:17.5px;color:#303030;">true</span>
<span class="t" style="left:43.00px;top:246.00px;font-size:17.5px;color:#303030;letter-spacing:-0.168px;">2022-09-06</span>
<span class="t" style="left:43.00px;top:267.00px;font-size:17.5px;color:#303030;letter-spacing:-0.108px;">15:31:12.473</span>
<span class="t" style="left:145.00px;top:256.00px;font-size:17.5px;color:#303030;letter-spacing:0.049px;">true</span>
<span class="t" style="left:264.00px;top:256.00px;font-size:17.5px;color:#303030;letter-spacing:0.049px;">true</span>
<span class="t" style="left:373.00px;top:256.00px;font-size:17.5px;color:#303030;letter-spacing:0.049px;">true</span>
<span class="t" style="left:501.00px;top:256.00px;font-size:17.5px;color:#303030;letter-spacing:0.049px;">true</span>
<span class="t" style="left:620.00px;top:256.00px;font-size:17.5px;color:#303030;letter-spacing:0.410px;">false</span>
<span class="t" style="left:737.50px;top:256.00px;font-size:17.5px;color:#303030;letter-spacing:0.410px;">false</span>
<span class="t" style="left:821.00px;top:256.00px;font-size:17.5px;color:#303030;letter-spacing:0.410px;">false</span>
<span class="t" style="left:934.50px;top:256.00px;font-size:17.5px;color:#303030;letter-spacing:0.410px;">false</span>
<span class="t" style="left:1059.00px;top:256.00px;font-size:17.5px;color:#303030;letter-spacing:0.049px;">true</span>
<span class="t" style="left:1204.00px;top:256.00px;font-size:17.5px;color:#303030;letter-spacing:0.049px;">true</span>
<span class="t" style="left:1336.00px;top:256.00px;font-size:17.5px;color:#303030;letter-spacing:0.410px;">false</span>
<span class="t" style="left:1409.00px;top:256.00px;font-size:17.5px;color:#303030;letter-spacing:0.410px;">false</span>
<span class="t" style="left:1522.20px;top:256.00px;font-size:17.5px;color:#303030;">true</span>
<span class="t" style="left:43.00px;top:289.00px;font-size:17.5px;color:#303030;letter-spacing:-0.168px;">2022-09-06</span>
<span class="t" style="left:43.00px;top:310.00px;font-size:17.5px;color:#303030;letter-spacing:-0.108px;">15:31:13.505</span>
<span class="t" style="left:145.00px;top:299.00px;font-size:17.5px;color:#303030;letter-spacing:0.049px;">true</span>
<span class="t" style="left:264.00px;top:299.00px;font-size:17.5px;color:#303030;letter-spacing:0.049px;">true</span>
<span class="t" style="left:373.00px;top:299.00px;font-size:17.5px;color:#303030;letter-spacing:0.049px;">true</span>
<span class="t" style="left:501.00px;top:299.00px;font-size:17.5px;color:#303030;letter-spacing:0.049px;">true</span>
<span class="t" style="left:620.00px;top:299.00px;font-size:17.5px;color:#303030;letter-spacing:0.410px;">false</span>
<span class="t" style="left:737.50px;top:299.00px;font-size:17.5px;color:#303030;letter-spacing:0.410px;">false</span>
<span class="t" style="left:821.00px;top:299.00px;font-size:17.5px;color:#303030;letter-spacing:0.410px;">false</span>
<span class="t" style="left:934.50px;top:299.00px;font-size:17.5px;color:#303030;letter-spacing:0.410px;">false</span>
<span class="t" style="left:1059.00px;top:299.00px;font-size:17.5px;color:#303030;letter-spacing:0.049px;">true</span>
<span class="t" style="left:1204.00px;top:299.00px;font-size:17.5px;color:#303030;letter-spacing:0.049px;">true</span>
<span class="t" style="left:1336.00px;top:299.00px;font-size:17.5px;color:#303030;letter-spacing:0.410px;">false</span>
<span class="t" style="left:1409.00px;top:299.00px;font-size:17.5px;color:#303030;letter-spacing:0.410px;">false</span>
<span class="t" style="left:1522.20px;top:299.00px;font-size:17.5px;color:#303030;">true</span>
<span class="t" style="left:43.00px;top:332.00px;font-size:17.5px;color:#303030;letter-spacing:-0.168px;">2022-09-06</span>
<span class="t" style="left:43.00px;top:353.00px;font-size:17.5px;color:#303030;letter-spacing:-0.108px;">15:31:14.505</span>
<span class="t" style="left:145.00px;top:342.00px;font-size:17.5px;color:#303030;letter-spacing:0.049px;">true</span>
<span class="t" style="left:264.00px;top:342.00px;font-size:17.5px;color:#303030;letter-spacing:0.049px;">true</span>
<span class="t" style="left:373.00px;top:342.00px;font-size:17.5px;color:#303030;letter-spacing:0.049px;">true</span>
<span class="t" style="left:501.00px;top:342.00px;font-size:17.5px;color:#303030;letter-spacing:0.049px;">true</span>
<span class="t" style="left:620.00px;top:342.00px;font-size:17.5px;color:#303030;letter-spacing:0.410px;">false</span>
<span class="t" style="left:737.50px;top:342.00px;font-size:17.5px;color:#303030;letter-spacing:0.410px;">false</span>
<span class="t" style="left:821.00px;top:342.00px;font-size:17.5px;color:#303030;letter-spacing:0.410px;">false</span>
<span class="t" style="left:934.50px;top:342.00px;font-size:17.5px;color:#303030;letter-spacing:0.410px;">false</span>
<span class="t" style="left:1059.00px;top:342.00px;font-size:17.5px;color:#303030;letter-spacing:0.049px;">true</span>
<span class="t" style="left:1204.00px;top:342.00px;font-size:17.5px;color:#303030;letter-spacing:0.049px;">true</span>
<span class="t" style="left:1336.00px;top:342.00px;font-size:17.5px;color:#303030;letter-spacing:0.410px;">false</span>
<span class="t" style="left:1409.00px;top:342.00px;font-size:17.5px;color:#303030;letter-spacing:0.410px;">false</span>
<span class="t" style="left:1522.20px;top:342.00px;font-size:17.5px;color:#303030;">true</span>
<span class="t" style="left:43.00px;top:376.00px;font-size:17.5px;color:#303030;letter-spacing:-0.168px;">2022-09-06</span>
<span class="t" style="left:43.00px;top:397.00px;font-size:17.5px;color:#303030;letter-spacing:-0.108px;">15:31:15.482</span>
<span class="t" style="left:145.00px;top:386.00px;font-size:17.5px;color:#303030;letter-spacing:0.049px;">true</span>
<span class="t" style="left:264.00px;top:386.00px;font-size:17.5px;color:#303030;letter-spacing:0.049px;">true</span>
<span class="t" style="left:373.00px;top:386.00px;font-size:17.5px;color:#303030;letter-spacing:0.049px;">true</span>
<span class="t" style="left:501.00px;top:386.00px;font-size:17.5px;color:#303030;letter-spacing:0.049px;">true</span>
<span class="t" style="left:620.00px;top:386.00px;font-size:17.5px;color:#303030;letter-spacing:0.410px;">false</span>
<span class="t" style="left:737.50px;top:386.00px;font-size:17.5px;color:#303030;letter-spacing:0.410px;">false</span>
<span class="t" style="left:821.00px;top:386.00px;font-size:17.5px;color:#303030;letter-spacing:0.410px;">false</span>
<span class="t" style="left:934.50px;top:386.00px;font-size:17.5px;color:#303030;letter-spacing:0.410px;">false</span>
<span class="t" style="left:1059.00px;top:386.00px;font-size:17.5px;color:#303030;letter-spacing:0.049px;">true</span>
<span class="t" style="left:1204.00px;top:386.00px;font-size:17.5px;color:#303030;letter-spacing:0.049px;">true</span>
<span class="t" style="left:1336.00px;top:386.00px;font-size:17.5px;color:#303030;letter-spacing:0.410px;">false</span>
<span class="t" style="left:1409.00px;top:386.00px;font-size:17.5px;color:#303030;letter-spacing:0.410px;">false</span>
<span class="t" style="left:1522.20px;top:386.00px;font-size:17.5px;color:#303030;">true</span>
<span class="t" style="left:43.00px;top:419.00px;font-size:17.5px;color:#303030;letter-spacing:-0.168px;">2022-09-06</span>
<span class="t" style="left:43.00px;top:440.00px;font-size:17.5px;color:#303030;letter-spacing:-0.108px;">15:31:16.490</span>
<span class="t" style="left:145.00px;top:429.00px;font-size:17.5px;color:#303030;letter-spacing:0.049px;">true</span>
<span class="t" style="left:264.00px;top:429.00px;font-size:17.5px;color:#303030;letter-spacing:0.049px;">true</span>
<span class="t" style="left:373.00px;top:429.00px;font-size:17.5px;color:#303030;letter-spacing:0.049px;">true</span>
<span class="t" style="left:501.00px;top:429.00px;font-size:17.5px;color:#303030;letter-spacing:0.049px;">true</span>
<span class="t" style="left:620.00px;top:429.00px;font-size:17.5px;color:#303030;letter-spacing:0.410px;">false</span>
<span class="t" style="left:737.50px;top:429.00px;font-size:17.5px;color:#303030;letter-spacing:0.410px;">false</span>
<span class="t" style="left:821.00px;top:429.00px;font-size:17.5px;color:#303030;letter-spacing:0.410px;">false</span>
<span class="t" style="left:934.50px;top:429.00px;font-size:17.5px;color:#303030;letter-spacing:0.410px;">false</span>
<span class="t" style="left:1059.00px;top:429.00px;font-size:17.5px;color:#303030;letter-spacing:0.049px;">true</span>
<span class="t" style="left:1204.00px;top:429.00px;font-size:17.5px;color:#303030;letter-spacing:0.049px;">true</span>
<span class="t" style="left:1336.00px;top:429.00px;font-size:17.5px;color:#303030;letter-spacing:0.410px;">false</span>
<span class="t" style="left:1409.00px;top:429.00px;font-size:17.5px;color:#303030;letter-spacing:0.410px;">false</span>
<span class="t" style="left:1522.20px;top:429.00px;font-size:17.5px;color:#303030;">true</span>
</div>
<svg class="c" style="left:0;top:0;width:2560px;height:1318px" viewBox="0 0 2560 1318">
<line x1="1717.3" x2="2429.7" y1="368.9" y2="368.9" stroke="#eeeeee" stroke-width="1.25"/>
<line x1="1717.3" x2="2429.7" y1="416.6" y2="416.6" stroke="#eeeeee" stroke-width="1.25"/>
<line x1="1717.3" x2="2429.7" y1="464.3" y2="464.3" stroke="#eeeeee" stroke-width="1.25"/>
<line x1="1717.3" x2="2429.7" y1="512" y2="512" stroke="#eeeeee" stroke-width="1.25"/>
<line x1="1717.3" x2="2429.7" y1="559.7" y2="559.7" stroke="#3a3a3a" stroke-width="2.5"/>
<rect x="1752.8" y="364.2" width="284.9" height="195.4" fill="#1f77b4"/>
<rect x="2109.2" y="546.7" width="284.9" height="12.9" fill="#1f77b4"/>
<line x1="166.2" x2="1144.8" y1="1063.85" y2="1063.85" stroke="#eeeeee" stroke-width="1.25"/>
<line x1="166.2" x2="1144.8" y1="1019.20" y2="1019.20" stroke="#eeeeee" stroke-width="1.25"/>
<line x1="166.2" x2="1144.8" y1="974.55" y2="974.55" stroke="#eeeeee" stroke-width="1.25"/>
<line x1="166.2" x2="1144.8" y1="929.90" y2="929.90" stroke="#eeeeee" stroke-width="1.25"/>
<line x1="166.2" x2="1144.8" y1="885.25" y2="885.25" stroke="#eeeeee" stroke-width="1.25"/>
<line x1="166.2" x2="1144.8" y1="840.60" y2="840.60" stroke="#eeeeee" stroke-width="1.25"/>
<line x1="325.4" x2="325.4" y1="798.4" y2="1115" stroke="#e9e9e9" stroke-width="1.25"/>
<line x1="494.6" x2="494.6" y1="798.4" y2="1115" stroke="#e9e9e9" stroke-width="1.25"/>
<line x1="663.9" x2="663.9" y1="798.4" y2="1115" stroke="#e9e9e9" stroke-width="1.25"/>
<line x1="833.2" x2="833.2" y1="798.4" y2="1115" stroke="#e9e9e9" stroke-width="1.25"/>
<line x1="1002.5" x2="1002.5" y1="798.4" y2="1115" stroke="#e9e9e9" stroke-width="1.25"/>
<rect x="166" y="1108" width="979" height="1" fill="#444"/>
<rect x="166" y="1115" width="979" height="2" fill="#3a3a3a"/>
<path d="M166.2 1099.6 L399.9 1090.6 L414.6 1081.7 L442.3 1072.8 L555.1 1001.3 L623.2 992.4 L651.6 974.5 L679.3 965.6 L708.4 947.8 L733.4 938.8 L811.9 929.9 L826.9 921.0 L854.6 912.0 L972.8 903.1 L1057.3 849.5 L1087.3 840.6 L1116.7 831.7 L1144.8 813.8" fill="none" stroke="#39b54a" stroke-width="3.75" stroke-linejoin="round"/>
<line x1="1171.5" x2="1208.5" y1="815.8" y2="815.8" stroke="#39b54a" stroke-width="3.75"/>
<rect x="1433.4" y="793.9" width="979.3" height="346.5" fill="#f6efa6"/>
<rect x="1433.40" y="793.9" width="29.68" height="346.5" fill="#bf444c"/>
<rect x="1492.75" y="793.9" width="29.68" height="346.5" fill="#f2df9f"/>
<rect x="1759.83" y="793.9" width="29.68" height="346.5" fill="#e6b48a"/>
<rect x="1848.86" y="793.9" width="29.68" height="346.5" fill="#f2df9f"/>
<rect x="1937.89" y="793.9" width="29.68" height="346.5" fill="#f2dc9e"/>
<rect x="1967.56" y="793.9" width="29.68" height="346.5" fill="#e2a482"/>
<rect x="2026.92" y="793.9" width="29.68" height="346.5" fill="#f1dc9c"/>
<rect x="2056.59" y="793.9" width="29.68" height="346.5" fill="#d77d6f"/>
<rect x="2264.32" y="793.9" width="29.68" height="346.5" fill="#f1dc9c"/>
<rect x="2294.00" y="793.9" width="29.68" height="346.5" fill="#f1dc9c"/>
<rect x="1433" y="1140" width="979.6" height="1" fill="#6e7079" fill-opacity="0.85"/>
<rect x="1427" y="1140" width="6" height="1" fill="#6e7079"/>
<rect x="1434" y="1141" width="1" height="6" fill="#6e7079"/>
<rect x="1671" y="1141" width="1" height="6" fill="#6e7079"/>
<rect x="1908" y="1141" width="1" height="6" fill="#6e7079"/>
<rect x="2145" y="1141" width="1" height="6" fill="#6e7079"/>
<rect x="2382" y="1141" width="1" height="6" fill="#6e7079"/>
<rect x="2412" y="1141" width="1" height="6" fill="#6e7079"/>
<defs><linearGradient id="vg" x1="0" y1="0" x2="0" y2="1"><stop offset="0" stop-color="#bf444c"/><stop offset="0.5" stop-color="#d88273"/><stop offset="1" stop-color="#f6efa6"/></linearGradient></defs>
<rect x="2438.4" y="812.9" width="25" height="165.6" fill="url(#vg)"/>
<rect x="2436" y="804" width="30" height="7.4" rx="3.7" fill="#bf444c"/>
<rect x="2436" y="979.7" width="30" height="7.4" rx="3.7" fill="#f6efa6"/>
</svg>
<span class="t" style="left:1687.70px;top:361.00px;font-size:15.6px;color:#444;transform:scaleX(1.0684);transform-origin:0 0;">800</span>
<span class="t" style="left:1687.70px;top:409.00px;font-size:15.6px;color:#444;transform:scaleX(1.0684);transform-origin:0 0;">600</span>
<span class="t" style="left:1687.70px;top:457.00px;font-size:15.6px;color:#444;transform:scaleX(1.0684);transform-origin:0 0;">400</span>
<span class="t" style="left:1687.70px;top:504.00px;font-size:15.6px;color:#444;transform:scaleX(1.0684);transform-origin:0 0;">200</span>
<span class="t" style="left:1706.50px;top:552.00px;font-size:15.6px;color:#444;transform:scaleX(1.0376);transform-origin:0 0;">0</span>
<span class="t" style="left:1880.30px;top:563.00px;font-size:15.6px;color:#444;transform:scaleX(1.1012);transform-origin:0 0;">true</span>
<span class="t" style="left:2234.20px;top:563.00px;font-size:15.6px;color:#444;transform:scaleX(1.0623);transform-origin:0 0;">false</span>
<span class="t" style="left:155.96px;top:1101.00px;font-size:15px;color:#444;">0</span>
<span class="t" style="left:155.96px;top:1056.00px;font-size:15px;color:#444;">5</span>
<span class="t" style="left:147.62px;top:1011.00px;font-size:15px;color:#444;">10</span>
<span class="t" style="left:147.62px;top:967.00px;font-size:15px;color:#444;">15</span>
<span class="t" style="left:147.62px;top:922.00px;font-size:15px;color:#444;">20</span>
<span class="t" style="left:147.62px;top:877.00px;font-size:15px;color:#444;">25</span>
<span class="t" style="left:147.62px;top:833.00px;font-size:15px;color:#444;">30</span>
<span class="t" style="left:307.15px;top:1122.00px;font-size:15px;color:#444;letter-spacing:-0.258px;">15:41</span>
<span class="t" style="left:476.35px;top:1122.00px;font-size:15px;color:#444;letter-spacing:-0.258px;">15:42</span>
<span class="t" style="left:645.65px;top:1122.00px;font-size:15px;color:#444;letter-spacing:-0.258px;">15:43</span>
<span class="t" style="left:814.95px;top:1122.00px;font-size:15px;color:#444;letter-spacing:-0.258px;">15:44</span>
<span class="t" style="left:984.25px;top:1122.00px;font-size:15px;color:#444;letter-spacing:-0.258px;">15:45</span>
<span class="t" style="left:286.65px;top:1141.00px;font-size:15px;color:#444;letter-spacing:-0.341px;">Sep 6, 2022</span>
<span class="t" style="left:1215.20px;top:809.00px;font-size:15px;color:#444;">counter</span>
<span class="t" style="left:1364.10px;top:1149.00px;font-size:15.4px;color:#6e7079;letter-spacing:0.386px;">2022-09-6</span>
<span class="t" style="left:1443.50px;top:1149.00px;font-size:15.4px;color:#6e7079;letter-spacing:-0.138px;">15:41:24.487</span>
<span class="t" style="left:1601.50px;top:1149.00px;font-size:15.4px;color:#6e7079;letter-spacing:0.386px;">2022-09-6</span>
<span class="t" style="left:1680.90px;top:1149.00px;font-size:15.4px;color:#6e7079;letter-spacing:-0.138px;">15:42:09.469</span>
<span class="t" style="left:1838.90px;top:1149.00px;font-size:15.4px;color:#6e7079;letter-spacing:0.386px;">2022-09-6</span>
<span class="t" style="left:1918.30px;top:1149.00px;font-size:15.4px;color:#6e7079;letter-spacing:-0.138px;">15:43:13.468</span>
<span class="t" style="left:2076.30px;top:1149.00px;font-size:15.4px;color:#6e7079;letter-spacing:0.386px;">2022-09-6</span>
<span class="t" style="left:2155.70px;top:1149.00px;font-size:15.4px;color:#6e7079;letter-spacing:-0.138px;">15:45:03.474</span>
<span class="t" style="left:2313.70px;top:1149.00px;font-size:15.4px;color:#6e7079;letter-spacing:0.386px;">2022-09-6</span>
<span class="t" style="left:2393.10px;top:1149.00px;font-size:15.4px;color:#6e7079;letter-spacing:-0.138px;">15:45:53.485</span>
<span class="t" style="left:2404.12px;top:799.00px;font-size:15px;color:#333;">74</span>
<span class="t" style="left:2412.46px;top:975.00px;font-size:15px;color:#555;">3</span>
</body></html>
